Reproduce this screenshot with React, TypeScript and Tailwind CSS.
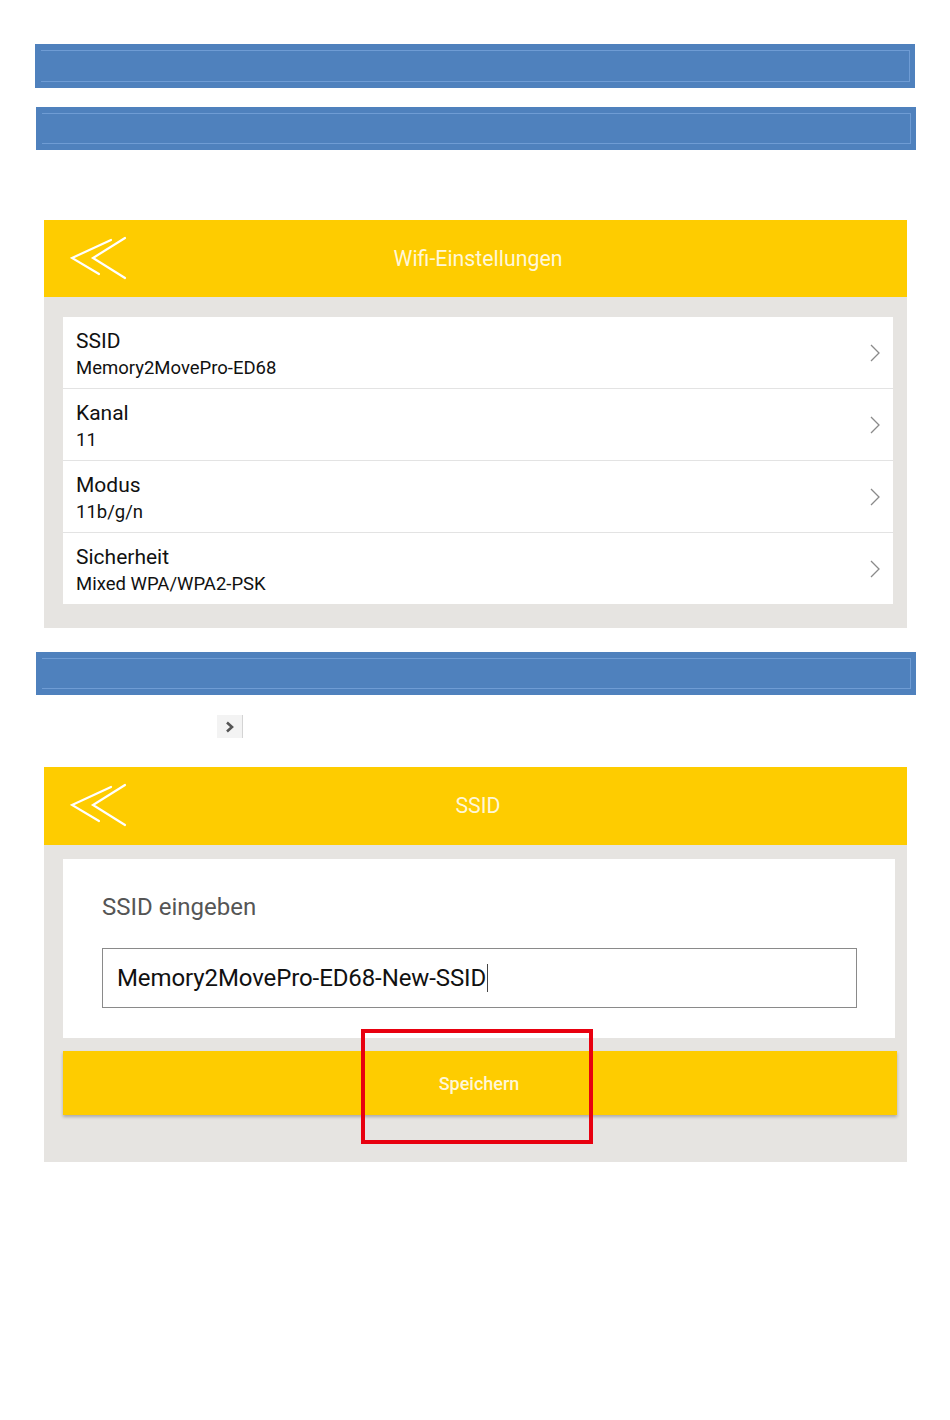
import React from 'react';

const rows = [
    { title: 'SSID', value: 'Memory2MovePro-ED68' },
    { title: 'Kanal', value: '11' },
    { title: 'Modus', value: '11b/g/n' },
    { title: 'Sicherheit', value: 'Mixed WPA/WPA2-PSK' },
];

function BlueBar({ className = '' }: { className?: string }) {
    return (
        <div className={`relative h-[43px] w-[880px] bg-[#4f81bd] ${className}`}>
            <div className="absolute left-[6px] right-[5px] top-[6px] bottom-[6px] border-y border-r border-[#6f9cd4]" />
        </div>
    );
}

function BackIcon() {
    return (
        <svg width="58" height="44" viewBox="0 0 58 44" fill="none" stroke="#fff" strokeWidth="2.2" strokeLinecap="round">
            <path d="M41 4 L2 22 L29 38" />
            <path d="M55 2 L23 22 L55 42" />
        </svg>
    );
}

function Header({ title, tall = false }: { title: string; tall?: boolean }) {
    return (
        <div className={`relative flex items-center justify-center bg-[#fecc00] ${tall ? 'h-[78px]' : 'h-[77px]'}`}>
            <div className="absolute left-[26px] top-[16px]">
                <BackIcon />
            </div>
            <span className="ml-[5px] text-[21.3px] text-[#fff7d8]">{title}</span>
        </div>
    );
}

function RowChevron() {
    return (
        <svg width="12" height="18" viewBox="0 0 12 18" fill="none" stroke="#8a8a8a" strokeWidth="1.3">
            <path d="M2 1 L10 9 L2 17" />
        </svg>
    );
}

export default function App() {
    return (
        <div className="min-h-[1420px] bg-white pt-[44px] font-['Roboto',sans-serif]">
            <BlueBar className="ml-[35px] h-[44px]" />
            <BlueBar className="ml-[36px] mt-[19px] w-[879px]" />

            <div className="ml-[44px] mt-[70px] w-[863px]">
                <Header title="Wifi-Einstellungen" />
                <div className="bg-[#e6e4e1] pb-[24px] pl-[19px] pr-[14px] pt-[20px]">
                    <div className="bg-white">
                        {rows.map((row, i) => (
                            <div
                                key={row.title}
                                className={`flex items-center justify-between pl-[13px] pr-[12px] ${i > 0 ? 'h-[72px] border-t border-[#e3e3e3]' : 'h-[71px]'}`}
                            >
                                <div className="flex flex-col pt-[5px]">
                                    <span className="text-[21px] leading-[26px] text-[#111]">{row.title}</span>
                                    <span className="text-[18.5px] leading-[28px] text-[#111]">{row.value}</span>
                                </div>
                                <RowChevron />
                            </div>
                        ))}
                    </div>
                </div>
            </div>

            <BlueBar className="ml-[36px] mt-[24px] w-[879px]" />

            <div className="ml-[217px] mt-[20px] flex h-[23px] w-[26px] items-center justify-center border-r border-[#d4d4d4] bg-[#f3f3f3]">
                <svg width="10" height="12" viewBox="0 0 10 12" fill="none" stroke="#555" strokeWidth="2.6">
                    <path d="M2 1.5 L7 6 L2 10.5" />
                </svg>
            </div>

            <div className="ml-[44px] mt-[29px] w-[863px]">
                <Header title="SSID" tall />
                <div className="relative bg-[#e6e4e1] pb-[47px] pl-[19px] pr-[12px] pt-[14px]">
                    <div className="bg-white pb-[30px] pl-[39px] pr-[38px] pt-[33px]">
                        <div className="text-[24px] leading-[30px] text-[#555]">SSID eingeben</div>
                        <div className="mt-[26px] flex h-[60px] items-center border border-[#8a8a8a] pl-[14px]">
                            <span className="text-[24px] tracking-[-0.1px] text-[#111]">Memory2MovePro-ED68-New-SSID</span>
                            <span className="ml-[1px] h-[28px] w-[1px] bg-[#444]" />
                        </div>
                    </div>
                    <div className="mt-[13px] mr-[-2px] flex h-[64px] items-center justify-center bg-[#fecc00] shadow-[0_2px_3px_rgba(0,0,0,0.25)]">
                        <span className="ml-[-2px] text-[18px] font-medium text-[#fff7d8]">Speichern</span>
                    </div>
                    <div className="absolute left-[317px] top-[184px] h-[115px] w-[232px] border-[4px] border-[#e8000f]" />
                </div>
            </div>
        </div>
    );
}
